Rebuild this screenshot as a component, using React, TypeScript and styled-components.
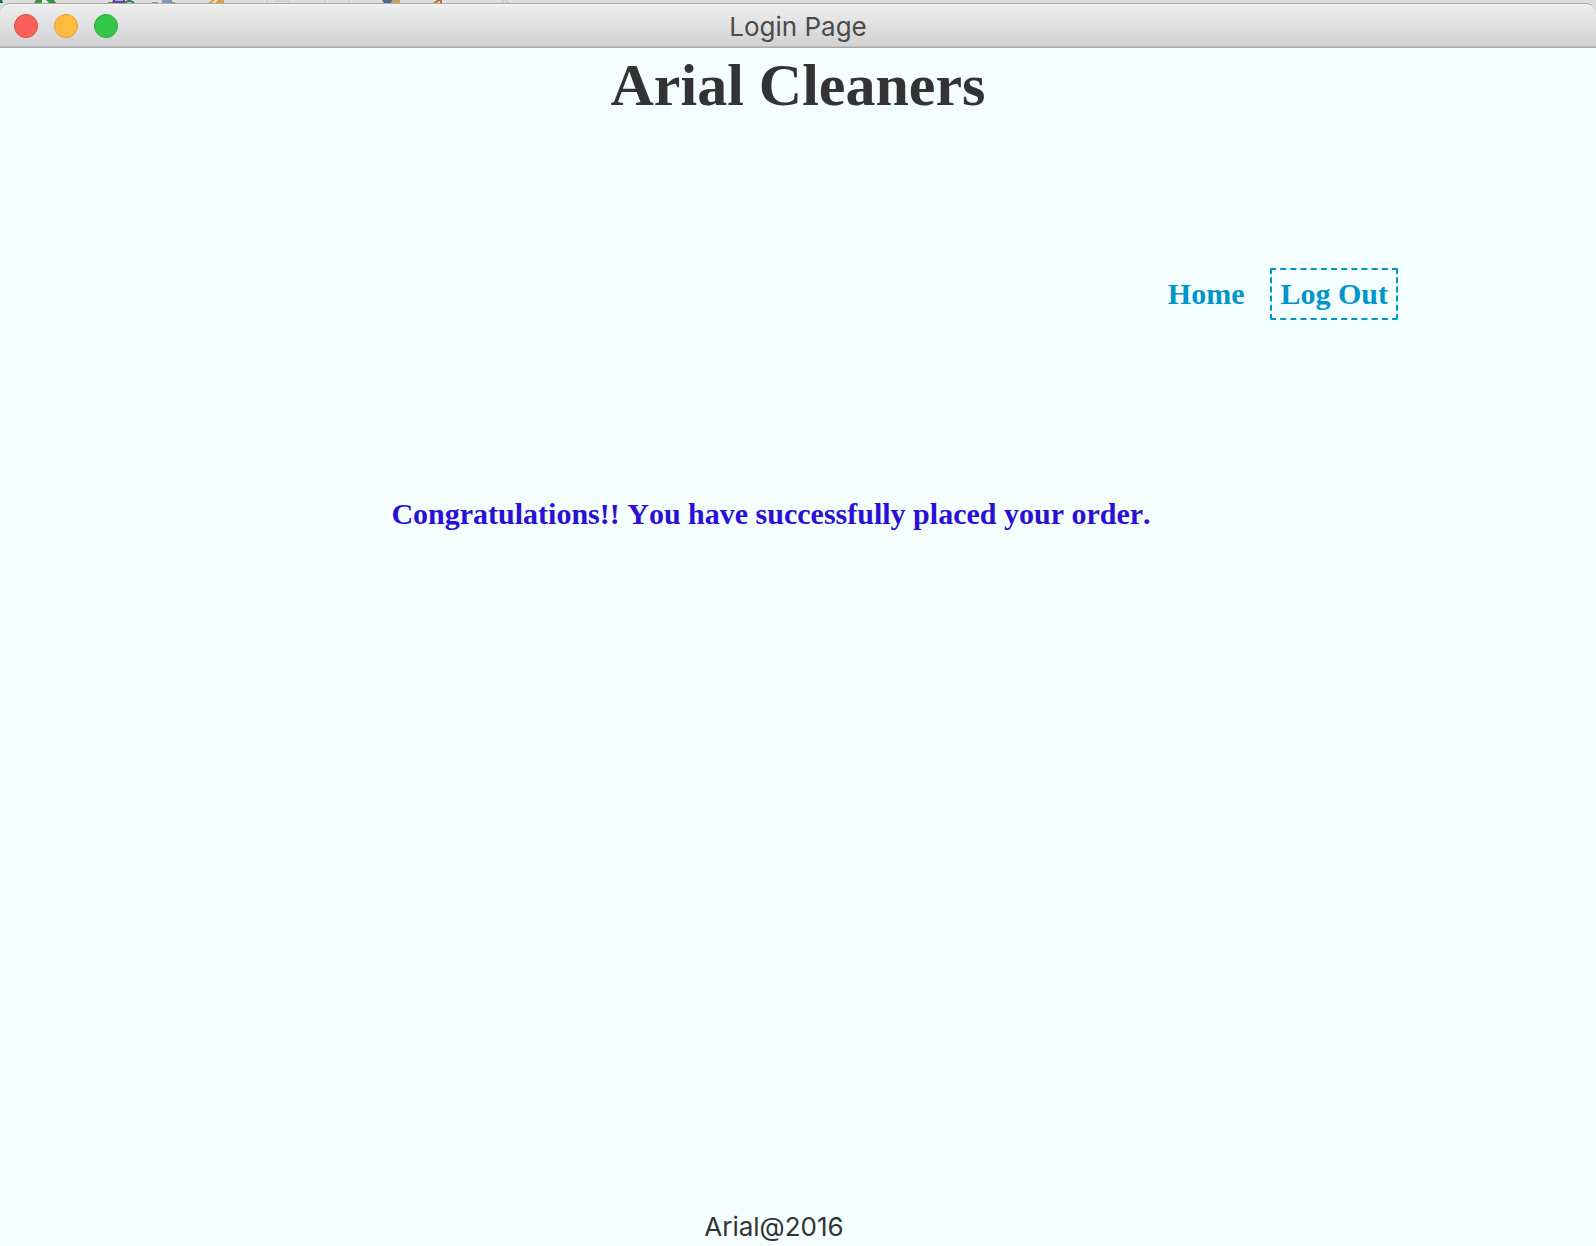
import React from "react";
import styled, { createGlobalStyle } from "styled-components";

const GlobalStyle = createGlobalStyle`
  * { box-sizing: border-box; }
  body { margin: 0; background: #f4feff; }
`;

const serif = `"Liberation Serif", "Times New Roman", serif`;
const sans = `Inter, Roboto, sans-serif`;

const Window = styled.div`
  display: flex;
  flex-direction: column;
  min-height: 100vh;
  background: #f4feff;
  color: #333333;
  font-kerning: none;
`;

const Chrome = styled.div`
  background: #dedede;
`;

const ToolbarStrip = styled.svg`
  display: block;
  height: 3px;
`;

const TitleBar = styled.header`
  display: grid;
  grid-template-columns: 1fr auto 1fr;
  align-items: center;
  height: 45px;
  padding: 0 14px;
  border-top: 1px solid #a9a9a9;
  border-bottom: 1px solid #aaa8aa;
  border-radius: 10px 10px 0 0;
  background: linear-gradient(#efefef, #d1d1d1);
  box-shadow: inset 0 1px #f6f6f6, inset 0 -1px #bfbdbf;
`;

const Lights = styled.div`
  display: flex;
  gap: 16px;
`;

const Light = styled.button<{ $fill: string; $edge: string }>`
  width: 24px;
  height: 24px;
  padding: 0;
  border: 1px solid ${(p) => p.$edge};
  border-radius: 50%;
  background: ${(p) => p.$fill};
`;

const WindowTitle = styled.span`
  padding-top: 2px;
  font: 400 26px/32px ${sans};
  color: #4b4b4b;
`;

const Heading = styled.h1`
  margin: 0;
  padding-top: 3px;
  text-align: center;
  font: 700 60px/68px ${serif};
`;

const Nav = styled.nav`
  display: flex;
  justify-content: flex-end;
  gap: 16px;
  margin-top: 149px;
  padding-right: 198px;
`;

const NavLink = styled.a<{ $focused?: boolean }>`
  padding: 8px;
  border: 2px dashed ${(p) => (p.$focused ? "#0096c9" : "transparent")};
  border-radius: 2px;
  color: #0096c9;
  font: 700 30px/32px ${serif};
  text-decoration: none;
`;

const Main = styled.main`
  flex: 1;
  padding: 178px 54px 0 0;
`;

const Message = styled.p`
  margin: 0;
  text-align: center;
  color: #2a0fd5;
  font: 700 30px/32px ${serif};
  font-kerning: none;
`;

const Footer = styled.footer`
  padding: 0 48px 3px 0;
  text-align: center;
  font: 400 26px/32px ${sans};
`;

function BackgroundIcons() {
  return (
    <ToolbarStrip width="520" height="3" viewBox="0 0 520 3" aria-hidden="true">
      <path d="M0 0H2L3 3H0Z" fill="#1c6b32" />
      <path d="M36 0H54L56 3H34Z" fill="#38943f" />
      <path d="M42 0H46L49 3H42Z" fill="#e9f3df" />
      <path d="M108 2H112V3H108Z" fill="#ad7442" />
      <path d="M113 0H125V3H112Z" fill="#5a479c" />
      <path d="M115 0H123V1H115Z" fill="#b3a8de" />
      <path d="M125 3Q129 -1 134 3" fill="none" stroke="#2d7c42" strokeWidth="2" />
      <path d="M152 2H158V3H152ZM171 2H175V3H171Z" fill="#b98d63" />
      <path d="M162 0H172V3H162Z" fill="#8296b8" />
      <path d="M212 0H224V3H208Z" fill="#d99f54" />
      <path d="M215 0H218L215 3H212Z" fill="#f6e3b4" />
      <path d="M267 0V3M274 1H289V3M325 0V3M349 0V3" fill="none" stroke="#c9c9c9" />
      <path d="M382 0H393L391 3H384Z" fill="#526c91" />
      <path d="M393 0H400V3H391Z" fill="#cba25d" />
      <path d="M437 0H442V3H440V1L436 3H433Z" fill="#b57720" />
      <path d="M503 0V3M505 0L509 3" fill="none" stroke="#bdbdbd" />
    </ToolbarStrip>
  );
}

export default function App() {
  return (
    <Window>
      <GlobalStyle />
      <Chrome>
        <BackgroundIcons />
        <TitleBar>
          <Lights>
            <Light $fill="#fc605b" $edge="#df4744" aria-label="Close" />
            <Light $fill="#fdbc40" $edge="#de9f34" aria-label="Minimize" />
            <Light $fill="#34c84a" $edge="#27aa35" aria-label="Zoom" />
          </Lights>
          <WindowTitle>Login Page</WindowTitle>
        </TitleBar>
      </Chrome>
      <Heading>Arial Cleaners</Heading>
      <Nav>
        <NavLink href="#home">Home</NavLink>
        <NavLink href="#logout" $focused>Log Out</NavLink>
      </Nav>
      <Main>
        <Message>Congratulations!! You have successfully placed your order.</Message>
      </Main>
      <Footer>Arial@2016</Footer>
    </Window>
  );
}
